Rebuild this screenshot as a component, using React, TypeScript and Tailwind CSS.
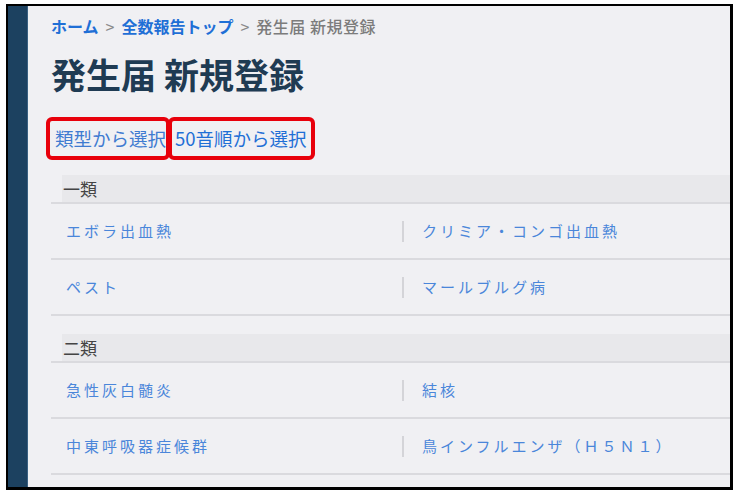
import React from "react";

type Row = [string, string];

const sections: { title: string; rows: Row[] }[] = [
  {
    title: "一類",
    rows: [
      ["エボラ出血熱", "クリミア・コンゴ出血熱"],
      ["ペスト", "マールブルグ病"],
    ],
  },
  {
    title: "二類",
    rows: [
      ["急性灰白髄炎", "結核"],
      ["中東呼吸器症候群", "鳥インフルエンザ（Ｈ５Ｎ１）"],
    ],
  },
];

function Section({ title, rows }: { title: string; rows: Row[] }) {
  return (
    <div>
      <div className="border-b-2 border-[#dadade]">
        <div className="ml-[11px] h-[27px] bg-[#e8e8eb] pl-[1px] text-[17px] leading-[27px] text-[#444]">
          {title}
        </div>
      </div>
      {rows.map(([a, b]) => (
        <div
          key={a}
          className="grid h-[56px] grid-cols-[351px_1fr] border-b-2 border-[#dadade] text-[15px] tracking-[3px] text-[#4a86da]"
        >
          <div className="flex items-center pl-[15px]">{a}</div>
          <div className="flex items-center">
            <span className="h-[21px] border-l-2 border-[#d4d4d8]" />
            <span className="ml-[18px]">{b}</span>
          </div>
        </div>
      ))}
    </div>
  );
}

function Sep() {
  return <span className="mx-[7px] font-normal text-[#8a8a8a]">&gt;</span>;
}

export default function App() {
  return (
    <div
      className="h-[495px] w-[740px] overflow-hidden bg-white pl-[6px] pt-[4px]"
      style={{ fontFamily: '"Noto Sans CJK JP", "Noto Sans", sans-serif' }}
    >
      <div className="flex h-[486px] w-[727px] overflow-hidden border-b-[3px] border-l-2 border-r-[3px] border-t-2 border-black">
        <div className="w-[20px] shrink-0 border-r border-[#3a6182] bg-[#1c4160]" />
        <main className="flex-1 bg-[#f0f0f3] pl-[23px] pt-[9px]">
          <nav className="text-[16px] leading-[23px]">
            <span className="font-bold text-[#1f6fd6]">ホーム</span>
            <Sep />
            <span className="font-bold text-[#1f6fd6]">全数報告トップ</span>
            <Sep />
            <span className="font-medium tracking-[0.5px] text-[#7c7c7c]">発生届 新規登録</span>
          </nav>

          <h1 className="mt-[14px] text-[35px] font-bold leading-[44px] text-[#1f3b53]">
            発生届 新規登録
          </h1>

          <div className="-ml-[5px] mt-[21px] flex text-[18.5px] leading-[25px]">
            <div className="rounded-[6px] border-4 border-[#e8000b] py-[5px] pl-[5px] text-[#3f7bd1]">
              類型から選択
            </div>
            <div className="-ml-[2px] rounded-[6px] border-4 border-[#e8000b] py-[5px] pl-[3px] pr-[4px] text-[#1f6fd6]">
              50音順から選択
            </div>
          </div>

          <div className="mt-[15px] flex flex-col gap-[18px]">
            {sections.map((s) => (
              <Section key={s.title} title={s.title} rows={s.rows} />
            ))}
          </div>
        </main>
      </div>
    </div>
  );
}
